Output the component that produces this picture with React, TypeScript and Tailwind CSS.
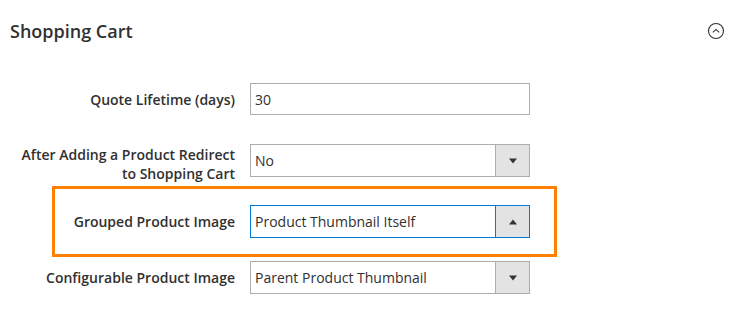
import React from "react";

function Arrow({ up }: { up?: boolean }) {
  return (
    <svg width="10" height="6" viewBox="0 0 10 6" className="block">
      {up ? <polygon points="1,5.5 9,5.5 5,0.5" fill="#373330" /> : <polygon points="1,0.5 9,0.5 5,5.5" fill="#373330" />}
    </svg>
  );
}

function Select({ value, up, focus }: { value: string; up?: boolean; focus?: boolean }) {
  return (
    <div
      className={`flex h-[33px] w-[280px] border bg-white ${focus ? "border-[#007bdb]" : "border-[#adadad]"}`}
    >
      <div className="flex flex-1 items-center pl-[4px] text-[14px] text-[#303030]">{value}</div>
      <div
        className={`flex w-[34px] items-center justify-center border-l bg-[#e3e3e3] ${focus ? "border-[#007bdb]" : "border-[#adadad]"}`}
      >
        <Arrow up={up} />
      </div>
    </div>
  );
}

export default function App() {
  return (
    <div className="h-[318px] w-[740px] bg-white font-['Open_Sans',sans-serif] text-[#303030]">
      <div className="flex h-[62px] items-center justify-between pl-[10px] pr-[15px]">
        <h2 className="text-[18px] font-semibold text-[#303030]">Shopping Cart</h2>
        <svg width="18" height="18" viewBox="0 0 18 18">
          <circle cx="9" cy="9" r="7.5" fill="none" stroke="#303030" strokeWidth="1.1" />
          <polyline points="5.8,10.4 9,7.4 12.2,10.4" fill="none" stroke="#303030" strokeWidth="1.1" />
        </svg>
      </div>

      <div className="mt-[21px] flex items-center">
        <label className="w-[235px] text-right text-[14px] leading-[19px] font-semibold">Quote Lifetime (days)</label>
        <div className="ml-[15px] flex h-[32px] w-[280px] items-center border border-[#adadad] pl-[4px] text-[14px]">
          30
        </div>
      </div>

      <div className="mt-[29px] flex h-[33px] items-start">
        <label className="w-[235px] pt-[1px] text-right text-[14px] leading-[19px] font-semibold">
          After Adding a Product Redirect
          <br />
          to Shopping Cart
        </label>
        <div className="ml-[15px]">
          <Select value="No" />
        </div>
      </div>

      <div className="ml-[52px] mt-[9px] w-[505px] border-[3px] border-[#ff7f00] py-[16px]">
        <div className="flex items-center">
          <label className="w-[180px] text-right text-[14px] leading-[19px] font-semibold">Grouped Product Image</label>
          <div className="ml-[15px]">
            <Select value="Product Thumbnail Itself" up focus />
          </div>
        </div>
      </div>

      <div className="mt-[4px] flex items-center">
        <label className="w-[235px] text-right text-[14px] leading-[19px] font-semibold">Configurable Product Image</label>
        <div className="ml-[15px]">
          <Select value="Parent Product Thumbnail" />
        </div>
      </div>
    </div>
  );
}
